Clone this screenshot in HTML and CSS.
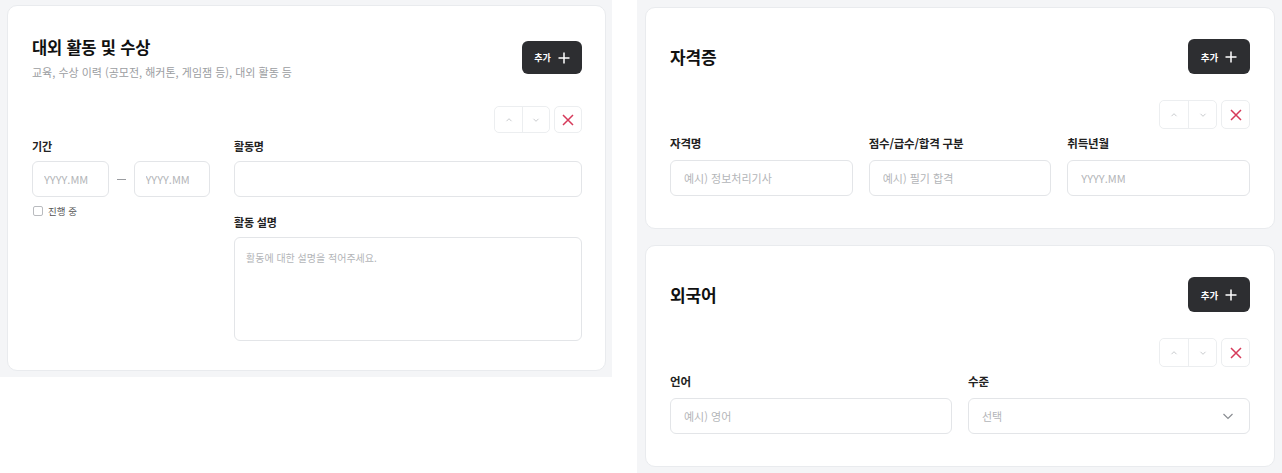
FILE: index.html
```html
<!DOCTYPE html>
<html lang="ko">
<head>
    <meta charset="UTF-8">
    <title>이력서 작성</title>
    <link rel="stylesheet" href="styles.css">
</head>
<body>
<div class="page">
    <!-- 대외 활동 -->
    <div class="panel panel-left">
        <section class="card card-activity">
            <div class="card-head">
                <div class="head-text">
                    <h2 class="card-title">대외 활동 및 수상</h2>
                    <p class="card-desc">교육, 수상 이력 (공모전, 해커톤, 게임잼 등), 대외 활동 등</p>
                </div>
                <button class="add-btn">추가
                    <svg viewBox="0 0 12 12" width="12" height="12"><path d="M6 0.5V11.5M0.5 6H11.5" stroke="#fff" stroke-width="1.5" fill="none"/></svg>
                </button>
            </div>
            <div class="item-tools">
                <div class="move-group">
                    <button class="tool-btn"><svg viewBox="0 0 10 10" width="10" height="10"><path d="M2.5 6.2L5 3.7L7.5 6.2" stroke="#c9cbce" stroke-width="1" fill="none"/></svg></button>
                    <button class="tool-btn"><svg viewBox="0 0 10 10" width="10" height="10"><path d="M2.5 3.8L5 6.3L7.5 3.8" stroke="#c9cbce" stroke-width="1" fill="none"/></svg></button>
                </div>
                <button class="tool-btn del-btn"><svg viewBox="0 0 12 12" width="12" height="12"><path d="M1 1L11 11M11 1L1 11" stroke="#d63a5a" stroke-width="1.5" fill="none"/></svg></button>
            </div>
            <div class="activity-grid">
                <div class="col-period">
                    <div class="field-label">기간</div>
                    <div class="period-row">
                        <input class="text-input" placeholder="YYYY.MM">
                        <span class="dash"></span>
                        <input class="text-input" placeholder="YYYY.MM">
                    </div>
                    <label class="check"><span class="check-box"></span>진행 중</label>
                </div>
                <div class="col-main">
                    <div class="field-label">활동명</div>
                    <input class="text-input">
                    <div class="field-label label-gap">활동 설명</div>
                    <textarea class="text-area" placeholder="활동에 대한 설명을 적어주세요."></textarea>
                </div>
            </div>
        </section>
    </div>

    <div class="panel panel-right">
        <!-- 자격증 -->
        <section class="card card-wide">
            <div class="card-head">
                <h2 class="card-title title-lg">자격증</h2>
                <button class="add-btn add-btn-lg">추가
                    <svg viewBox="0 0 12 12" width="12" height="12"><path d="M6 0.5V11.5M0.5 6H11.5" stroke="#fff" stroke-width="1.5" fill="none"/></svg>
                </button>
            </div>
            <div class="item-tools tools-lg">
                <div class="move-group">
                    <button class="tool-btn"><svg viewBox="0 0 10 10" width="10" height="10"><path d="M2.5 6.2L5 3.7L7.5 6.2" stroke="#c9cbce" stroke-width="1" fill="none"/></svg></button>
                    <button class="tool-btn"><svg viewBox="0 0 10 10" width="10" height="10"><path d="M2.5 3.8L5 6.3L7.5 3.8" stroke="#c9cbce" stroke-width="1" fill="none"/></svg></button>
                </div>
                <button class="tool-btn del-btn"><svg viewBox="0 0 12 12" width="12" height="12"><path d="M1 1L11 11M11 1L1 11" stroke="#d63a5a" stroke-width="1.5" fill="none"/></svg></button>
            </div>
            <div class="field-grid cols-3">
                <div class="field">
                    <div class="field-label">자격명</div>
                    <input class="text-input" placeholder="예시) 정보처리기사">
                </div>
                <div class="field">
                    <div class="field-label">점수/급수/합격 구분</div>
                    <input class="text-input" placeholder="예시) 필기 합격">
                </div>
                <div class="field">
                    <div class="field-label">취득년월</div>
                    <input class="text-input" placeholder="YYYY.MM">
                </div>
            </div>
        </section>

        <!-- 외국어 -->
        <section class="card card-wide">
            <div class="card-head">
                <h2 class="card-title title-lg">외국어</h2>
                <button class="add-btn add-btn-lg">추가
                    <svg viewBox="0 0 12 12" width="12" height="12"><path d="M6 0.5V11.5M0.5 6H11.5" stroke="#fff" stroke-width="1.5" fill="none"/></svg>
                </button>
            </div>
            <div class="item-tools tools-lg">
                <div class="move-group">
                    <button class="tool-btn"><svg viewBox="0 0 10 10" width="10" height="10"><path d="M2.5 6.2L5 3.7L7.5 6.2" stroke="#c9cbce" stroke-width="1" fill="none"/></svg></button>
                    <button class="tool-btn"><svg viewBox="0 0 10 10" width="10" height="10"><path d="M2.5 3.8L5 6.3L7.5 3.8" stroke="#c9cbce" stroke-width="1" fill="none"/></svg></button>
                </div>
                <button class="tool-btn del-btn"><svg viewBox="0 0 12 12" width="12" height="12"><path d="M1 1L11 11M11 1L1 11" stroke="#d63a5a" stroke-width="1.5" fill="none"/></svg></button>
            </div>
            <div class="field-grid cols-2">
                <div class="field">
                    <div class="field-label">언어</div>
                    <input class="text-input" placeholder="예시) 영어">
                </div>
                <div class="field">
                    <div class="field-label">수준</div>
                    <div class="text-input select-box">
                        <span>선택</span>
                        <svg viewBox="0 0 12 12" width="12" height="12"><path d="M1.5 4L6 8.5L10.5 4" stroke="#8a8d92" stroke-width="1.2" fill="none"/></svg>
                    </div>
                </div>
            </div>
        </section>
    </div>
</div>
</body>
</html>
```

FILE: styles.css
```css
* {
    margin: 0;
    padding: 0;
    box-sizing: border-box;
}
body {
    background: #fff;
    font-family: "Noto Sans CJK KR", "Noto Sans", sans-serif;
    color: #222;
}
.page {
    display: flex;
    align-items: flex-start;
    gap: 25px;
    width: 1282px;
}
.panel {
    background: #f4f5f7;
}
.panel-left {
    width: 612px;
    padding: 5px 6px 6px 7px;
}
.panel-right {
    flex: 1;
    height: 473px;
    padding: 7px 7px 0 8px;
    display: flex;
    flex-direction: column;
    gap: 16px;
}
.card {
    background: #fff;
    border: 1px solid #e9ebee;
    border-radius: 10px;
}
.card-activity {
    padding: 29px 23px 29px 24px;
}
.card-wide {
    padding: 31px 24px 32px 24px;
}

/* header */
.card-head {
    display: flex;
    justify-content: space-between;
    align-items: center;
}
.card-title {
    font-size: 16.5px;
    font-weight: 700;
    line-height: 24px;
    letter-spacing: -0.2px;
    color: #111;
}
.title-lg {
    font-size: 17px;
}
.card-desc {
    margin-top: 5px;
    font-size: 11px;
    line-height: 16px;
    color: #9b9da1;
}
.add-btn {
    display: flex;
    align-items: center;
    justify-content: center;
    gap: 7px;
    width: 60px;
    height: 33px;
    border: none;
    border-radius: 6px;
    background: #2d2e31;
    color: #fff;
    font-family: inherit;
    font-size: 9px;
    font-weight: 700;
}
.add-btn-lg {
    width: 62px;
    height: 35px;
    font-size: 9.5px;
}

/* up / down / delete */
.item-tools {
    display: flex;
    justify-content: flex-end;
    gap: 4px;
    margin-top: 26px;
}
.move-group {
    display: flex;
    border: 1px solid #eceef0;
    border-radius: 5px;
}
.tool-btn {
    display: flex;
    align-items: center;
    justify-content: center;
    width: 28px;
    height: 27px;
    background: #fff;
    border: none;
    border-radius: 5px;
}
.move-group .tool-btn {
    width: 27px;
    height: 25px;
}
.move-group .tool-btn + .tool-btn {
    border-left: 1px solid #eceef0;
    border-radius: 0 5px 5px 0;
}
.del-btn {
    border: 1px solid #eceef0;
}
.tools-lg .tool-btn {
    width: 29px;
    height: 29px;
}
.tools-lg .move-group .tool-btn {
    width: 28px;
    height: 27px;
}

/* fields */
.field-label {
    font-size: 11px;
    font-weight: 700;
    line-height: 16px;
    color: #222;
    letter-spacing: -0.2px;
    margin-bottom: 7px;
}
.text-input {
    display: block;
    width: 100%;
    height: 36px;
    padding: 0 11px;
    border: 1px solid #e3e5e8;
    border-radius: 6px;
    background: #fff;
    font-family: inherit;
    font-size: 11px;
    color: #222;
    outline: none;
}
.text-input::placeholder,
.text-area::placeholder {
    color: #b3b5b8;
}
.text-area {
    display: block;
    width: 100%;
    height: 104px;
    padding: 12px 11px;
    border: 1px solid #e3e5e8;
    border-radius: 6px;
    font-family: inherit;
    font-size: 10px;
    resize: none;
    outline: none;
}

/* 대외활동 layout */
.activity-grid {
    display: grid;
    grid-template-columns: 178px 1fr;
    gap: 24px;
    margin-top: 5px;
}
.period-row {
    display: flex;
    align-items: center;
    gap: 8px;
}
.period-row .text-input {
    flex: 1;
}
.dash {
    width: 9px;
    height: 1px;
    background: #9a9ca0;
}
.check {
    display: flex;
    align-items: center;
    gap: 5px;
    margin-top: 7px;
    padding-left: 1px;
    font-size: 9.5px;
    line-height: 14px;
    color: #555;
}
.check-box {
    width: 10px;
    height: 10px;
    border: 1px solid #b9bbbf;
    border-radius: 2px;
}
.label-gap {
    margin-top: 17px;
}

/* 자격증 / 외국어 */
.field-grid {
    display: grid;
    gap: 16px;
    margin-top: 6px;
}
.cols-3 {
    grid-template-columns: repeat(3, 1fr);
}
.cols-2 {
    grid-template-columns: repeat(2, 1fr);
}
.card-wide .field-label {
    font-size: 11.5px;
    margin-bottom: 9px;
}
.card-wide .text-input {
    padding: 0 13px;
}
.select-box {
    display: flex;
    align-items: center;
    justify-content: space-between;
    color: #b3b5b8;
    padding-right: 15px !important;
}
```
